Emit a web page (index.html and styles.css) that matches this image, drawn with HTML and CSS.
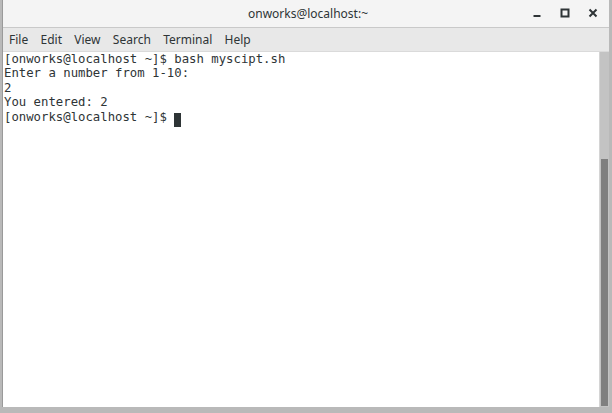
FILE: index.html
```html
<!DOCTYPE html>
<html lang="en">
<head>
    <meta charset="UTF-8">
    <title>onworks@localhost:~</title>
    <link rel="stylesheet" href="styles.css">
</head>
<body>
    <div class="window">
        <div class="titlebar">
            <div class="title">onworks@localhost:~</div>
            <div class="controls">
                <svg class="ctl" width="10" height="10" viewBox="0 0 10 10"><rect x="1.5" y="7" width="7" height="2" fill="#2e3436"/></svg>
                <svg class="ctl" width="10" height="10" viewBox="0 0 10 10"><rect x="1.5" y="1.5" width="7" height="7" fill="none" stroke="#2e3436" stroke-width="2"/></svg>
                <svg class="ctl" width="10" height="10" viewBox="0 0 10 10"><path d="M1.5 1.5 L8.5 8.5 M8.5 1.5 L1.5 8.5" stroke="#2e3436" stroke-width="2"/></svg>
            </div>
        </div>

        <div class="menubar">
            <span>File</span>
            <span>Edit</span>
            <span>View</span>
            <span>Search</span>
            <span>Terminal</span>
            <span>Help</span>
        </div>

        <div class="content">
            <pre class="terminal">[onworks@localhost ~]$ bash myscipt.sh
Enter a number from 1-10:
2
You entered: 2
[onworks@localhost ~]$ <span class="cursor"> </span></pre>
            <div class="scrollbar">
                <div class="thumb"></div>
            </div>
        </div>
    </div>
</body>
</html>
```

FILE: styles.css
```css
body {
    margin: 0;
    padding: 0;
    width: 612px;
    height: 413px;
    overflow: hidden;
    background-color: #b9b9b9;
}

.window {
    display: flex;
    flex-direction: column;
    height: 407px;
    margin-left: 2px;
    margin-right: 3px;
    border-left: 1px solid #9a9a9a;
    background-color: #fff;
}

.titlebar {
    position: relative;
    height: 27px;
    display: flex;
    align-items: center;
    justify-content: center;
    background-color: #f4f4f4;
    border-bottom: 1px solid #c9c9c9;
}

.title {
    font-family: "Noto Sans", sans-serif;
    font-size: 12px;
    color: #2e3436;
    margin-left: 4px;
}

.controls {
    position: absolute;
    right: 11px;
    top: 8px;
    display: flex;
    gap: 18px;
}

.menubar {
    height: 22px;
    padding-bottom: 1px;
    display: flex;
    align-items: center;
    padding-left: 3px;
    background-color: #e8e8e8;
    border-bottom: 1px solid #dadada;
    font-family: "Noto Sans", sans-serif;
    font-size: 12px;
    color: #2e3436;
}

.menubar span {
    padding: 0 3px;
    margin-right: 6.3px;
}

.content {
    flex: 1;
    display: flex;
}

.terminal {
    flex: 1;
    margin: 0;
    padding: 0 0 0 1px;
    font-family: "DejaVu Sans Mono", monospace;
    font-size: 12.3px;
    line-height: 14.4px;
    color: #2e3436;
    background-color: #fff;
}

.cursor {
    display: inline-block;
    width: 7px;
    height: 14px;
    vertical-align: -3px;
    background-color: #2e3436;
}

.scrollbar {
    width: 9px;
    display: flex;
    flex-direction: column;
    justify-content: flex-end;
    background-color: #c3c3c3;
    border-left: 1px solid #d4d4d4;
}

.thumb {
    height: 247px;
    margin: 0 1px 1px 1px;
    background-color: #7f7f7f;
}
```
